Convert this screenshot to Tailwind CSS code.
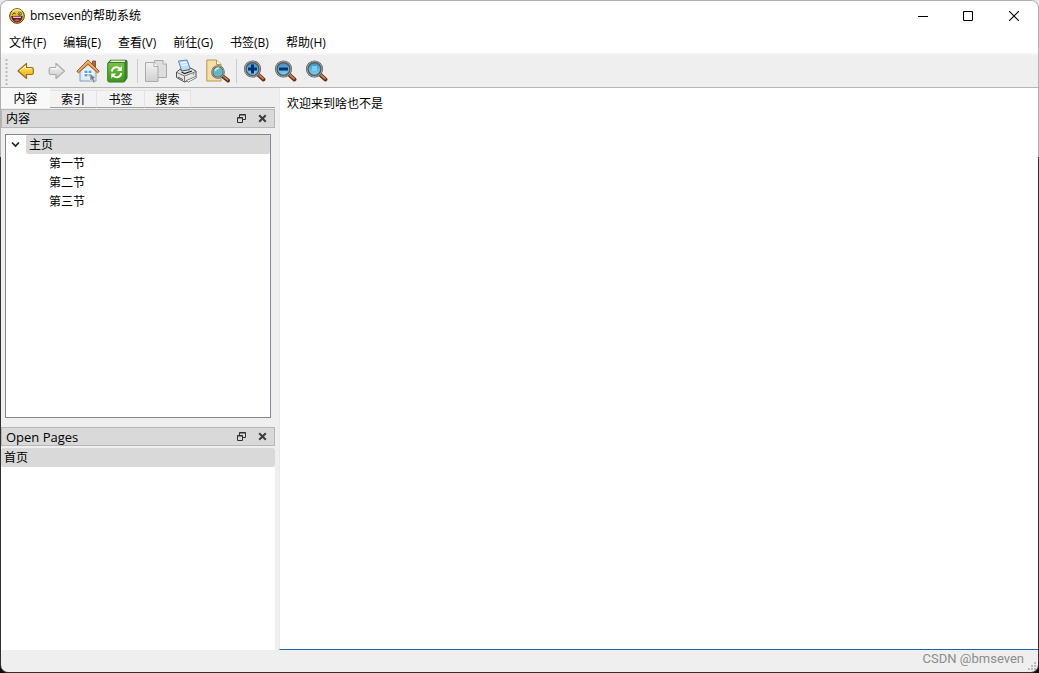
<!DOCTYPE html>
<html lang="zh-CN">
<head>
<meta charset="utf-8">
<meta name="viewport" content="width=device-width, initial-scale=1">
<title>bmseven的帮助系统</title>
<script src="https://cdn.jsdelivr.net/npm/@tailwindcss/browser@4"></script>
</head>
<body class="h-screen overflow-hidden bg-[linear-gradient(#e8e8e8_157px,#0c0c0d_157px)] font-['Open_Sans','Noto_Sans_CJK_SC',sans-serif] text-xs leading-4 text-black">
<svg class="absolute size-0" aria-hidden="true">
  <defs>
    <linearGradient id="gold" x1="0" y1="0" x2="0" y2="1"><stop offset="0" stop-color="#fff3a0"/><stop offset=".5" stop-color="#fccb35"/><stop offset="1" stop-color="#f59b0c"/></linearGradient>
    <linearGradient id="silver" x1="0" y1="0" x2="0" y2="1"><stop offset="0" stop-color="#f4f4f4"/><stop offset="1" stop-color="#cfcfcf"/></linearGradient>
    <linearGradient id="green" x1="0" y1="0" x2="0" y2="1"><stop offset="0" stop-color="#7cc04a"/><stop offset="1" stop-color="#3f9421"/></linearGradient>
    <linearGradient id="lens" x1="0" y1="0" x2="0" y2="1"><stop offset="0" stop-color="#3f86bd"/><stop offset="1" stop-color="#7fd9f7"/></linearGradient>
    <symbol id="magnifier" viewBox="0 0 24 24">
      <path d="M15 15.500l5.500 5" stroke="#5d3320" stroke-width="4" stroke-linecap="round"/>
      <path d="M15.500 15.500l4.500 4.200" stroke="#c98055" stroke-width="1.800" stroke-linecap="round"/>
      <circle cx="9.500" cy="10" r="7.200" fill="url(#lens)" stroke="#55585a" stroke-width="2.800"/>
      <circle cx="9.500" cy="10" r="7.500" fill="none" stroke="#a9adad" stroke-width=".9"/>
    </symbol>
    <symbol id="float" viewBox="0 0 9 9">
      <path d="M2.500 3V.500h6v5H6M2.500 1h6M.500 3.500h5v5h-5zM.500 4h5" fill="none" stroke="#303030" stroke-width="1"/>
    </symbol>
    <symbol id="close" viewBox="0 0 9 9">
      <path d="M1.200 1.200l6.600 6.600M7.800 1.200L1.200 7.800" fill="none" stroke="#3c3c3c" stroke-width="2"/>
    </symbol>
  </defs>
</svg>
<div class="h-full rounded-lg bg-[linear-gradient(#b0b0b0_157px,#303032_157px)] p-px">
<div class="flex h-full flex-col overflow-hidden rounded-[7px] bg-[#efefef]">
  <header class="flex h-[29px] shrink-0 items-center bg-white pl-2">
    <svg class="mr-[5px] size-4 shrink-0" viewBox="0 0 16 16" aria-hidden="true">
      <circle cx="8" cy="8" r="7.300" fill="#f3cc3c" stroke="#4b3508"/>
      <path d="M3.500 3.200q2-1.500 4.500-1.500t4.500 1.500" stroke="#fff1a0" stroke-width="1.200" fill="none"/>
      <path d="M2.700 8.300h10.600q-.4 5.700-5.300 5.700T2.700 8.300z" fill="#6c1747" stroke="#3c1806" stroke-width=".7"/>
      <path d="M4 8.700h8v1H4z" fill="#fff"/><path d="M5 12.300q3-2 6 0-3 2.200-6 0z" fill="#d95063"/>
      <path d="M3.500 6.700q1.500-3.400 3.200-.4" fill="none" stroke="#3d2605"/><circle cx="10.800" cy="5.800" r="1.700" fill="#fff" stroke="#3d2605" stroke-width=".7"/><circle cx="10.800" cy="6" r=".8" fill="#000"/>
    </svg>
    <h1 class="flex-1 whitespace-nowrap">bmseven的帮助系统</h1>
    <button class="flex h-full w-[46px] items-center justify-center" aria-label="最小化"><svg class="size-[10px]" viewBox="0 0 10 10"><path d="M0 5.500h10" stroke="#000"/></svg></button>
    <button class="flex h-full w-11 items-center justify-center" aria-label="最大化"><svg class="size-[10px]" viewBox="0 0 10 10"><rect x=".5" y=".5" width="9" height="9" rx="1" fill="none" stroke="#000" stroke-width="1.100"/></svg></button>
    <button class="flex h-full w-12 items-center justify-center" aria-label="关闭"><svg class="size-[10px]" viewBox="0 0 10 10"><path d="M0 0l10 10M10 0L0 10" stroke="#000" stroke-width="1.100"/></svg></button>
  </header>
  <nav class="flex h-[25px] shrink-0 items-center gap-px border-b-2 border-[#f5f5f5] bg-white pt-0.5" aria-label="菜单">
    <button class="px-2">文件(F)</button>
    <button class="px-2">编辑(E)</button>
    <button class="px-2">查看(V)</button>
    <button class="px-2">前往(G)</button>
    <button class="px-2">书签(B)</button>
    <button class="px-2">帮助(H)</button>
  </nav>
  <div class="flex h-[33px] shrink-0 items-center border-b border-[#b5b5b5] pl-1" role="toolbar" aria-label="工具栏">
    <svg class="mr-1.5 h-7 w-[3px]" viewBox="0 0 3 28" aria-hidden="true"><path d="M1.500 2v26" stroke="#b9b9b9" stroke-width="2" stroke-dasharray="2 2"/></svg>
    <div class="flex items-center gap-[7px]">
      <button aria-label="后退"><svg class="size-6" viewBox="0 0 24 24"><path d="M4 12L12.500 4.500v4h5q1.800 0 1.800 1.800v3.400q0 1.800-1.800 1.800h-5v4z" fill="url(#gold)" stroke="#9c6d20" stroke-width="1.200" stroke-linejoin="round"/><path d="M6 11.700L11.400 7v2.700H17" fill="none" stroke="#fff4b8"/></svg></button>
      <button aria-label="前进" disabled><svg class="size-6" viewBox="0 0 24 24"><path d="M19.500 12L11 4.500v4H6q-1.800 0-1.800 1.800v3.400q0 1.800 1.800 1.800h5v4z" fill="url(#silver)" stroke="#aaa" stroke-width="1.200" stroke-linejoin="round"/><path d="M6 9.800h6V7" fill="none" stroke="#fff"/></svg></button>
      <button aria-label="主页"><svg class="size-6" viewBox="0 0 24 24">
        <path d="M16.500 2h3v7h-3z" fill="#ad6b42" stroke="#74452a" stroke-width=".8"/>
        <path d="M4 11.500L12 4l8 7.500V22H4z" fill="#dfebf7" stroke="#849bb5"/>
        <path d="M.8 12.300L12 .9l11.300 11.400-1.700 1.500L12 5.400l-9.500 8.400z" fill="#df9648" stroke="#88501d" stroke-width=".9"/>
        <path d="M2.500 12L12 2.600l9.500 9.400" fill="none" stroke="#f9c886" stroke-width=".9"/>
        <path d="M8 11h8v7H8z" fill="#54a5e4" stroke="#fff"/><path d="M12 11v7M8 14.500h8" stroke="#fff"/>
        <path d="M14 14.500l6.500 5-3 .2 2 3.300-1.700.9-2-3.300L14 22z" fill="#7a8085" stroke="#eee" stroke-width=".6"/></svg></button>
      <button aria-label="刷新"><svg class="size-6" viewBox="0 0 24 24">
        <path d="M.500 4L3.500 .8h15q2 0 2 2V19l-2.700 3.500z" fill="#28671a"/><path d="M2.500 3L4.500 1.500h14L17.500 3.500z" fill="#e6efd9"/><path d="M18 4l2-2v17l-2 2.500z" fill="#3c832a"/>
        <rect x=".7" y="3.500" width="17.300" height="19.500" rx="1.500" fill="url(#green)" stroke="#357d22"/>
        <path d="M4.800 12.500q.8-4.300 4.700-4.300 2.200 0 3.500 1.800M14.300 14q-.8 4.300-4.700 4.300-2.200 0-3.500-1.800" fill="none" stroke="#f2ffe9" stroke-width="2"/>
        <path d="M14.800 7v5h-5zM4.300 19.500v-5h5z" fill="#f2ffe9"/></svg></button>
    </div>
    <span class="ml-1.5 mr-1.5 h-6 w-px bg-[#cbcbcb]"></span>
    <div class="flex items-center gap-[7px]">
      <button aria-label="复制" disabled><svg class="size-6" viewBox="0 0 24 24"><g stroke="#aaa" stroke-linejoin="round"><path d="M10.500 1.500h8.500l3.500 3.500V18.500H10.500z" fill="#dedede"/><path d="M19 1.500V5h3.500" fill="#fff"/><path d="M1.500 3.500h8.500l4 4V22.500H1.500z" fill="url(#silver)"/><path d="M10 3.500v4h4" fill="#fff"/></g></svg></button>
      <button aria-label="打印"><svg class="size-6" viewBox="0 0 24 24">
        <path d="M3.500 2l8.500-1 3.500 9.500-8.500 2.500z" fill="#b9dcff" stroke="#5588c6"/><path d="M5.500 4l6-.7M6.500 6.500l6-.8" stroke="#fff"/>
        <path d="M1.500 13L5.500 10l1 2 8-1.300L15.500 9l5.500 3v6L9.500 23l-8-4.500z" fill="#e7e7e7" stroke="#505050" stroke-linejoin="round"/>
        <path d="M2 13.500l7.500 3.500L21 12.500M9.500 17v6" fill="none" stroke="#777"/><path d="M6.500 13l3 1.500 7.500-2.500" fill="none" stroke="#222" stroke-width="1.200"/>
        <path d="M3 18l5 2.600" stroke="#555"/><path d="M11.500 21.500l9-4 1 1.200-8.500 4.500z" fill="#fff" stroke="#555" stroke-width=".7"/><circle cx="18.500" cy="15" r=".9" fill="#75c343"/></svg></button>
      <button aria-label="在文本中查找"><svg class="size-6" viewBox="0 0 24 24">
        <path d="M.8 1h9.700L15 5.500V22H.8z" fill="#f5dfa4" stroke="#b6964f"/><path d="M10.500 1v4.500H15" fill="#fff7d5" stroke="#b6964f"/>
        <path d="M17 17.500l5 4" stroke="#5d3320" stroke-width="4" stroke-linecap="round"/><path d="M17.500 17.500l4 3.200" stroke="#c98055" stroke-width="1.600" stroke-linecap="round"/>
        <circle cx="12" cy="13" r="5.800" fill="#6bb6bd" stroke="#555b5b" stroke-width="2"/><circle cx="12" cy="13" r="5.900" fill="none" stroke="#b8c0bd" stroke-width=".7"/><path d="M9 12q1-3 4-3" stroke="#c8eeee" fill="none" stroke-width="1.300"/></svg></button>
    </div>
    <span class="mx-1.5 h-6 w-px bg-[#cbcbcb]"></span>
    <div class="flex items-center gap-[7px]">
      <button aria-label="放大"><svg class="size-6" viewBox="0 0 24 24"><use href="#magnifier"/><path d="M8 5.500h3v3h3v3h-3v3H8v-3H5v-3h3z" fill="#062f74"/></svg></button>
      <button aria-label="缩小"><svg class="size-6" viewBox="0 0 24 24"><use href="#magnifier"/><path d="M5 8.500h9v3H5z" fill="#062f74"/></svg></button>
      <button aria-label="原始大小"><svg class="size-6" viewBox="0 0 24 24"><use href="#magnifier"/><path d="M7 7h5v5H7z" fill="#7acdf1"/></svg></button>
    </div>
  </div>
  <div class="flex min-h-0 flex-1">
    <aside class="flex w-[274px] shrink-0 flex-col">
      <div class="flex h-5 shrink-0 items-end" role="tablist">
        <button class="h-5 w-[49px] bg-[#f9f9f9] pt-px" role="tab" aria-selected="true">内容</button>
        <button class="h-[18px] w-[47px] border-t border-r border-b border-t-[#e3e3e3] border-r-[#e3e3e3] border-b-[#a0a0a0] bg-[#f3f3f3] pt-px" role="tab" aria-selected="false">索引</button>
        <button class="h-[18px] w-12 border-t border-r border-b border-t-[#e3e3e3] border-r-[#e3e3e3] border-b-[#a0a0a0] bg-[#f3f3f3] pt-px" role="tab" aria-selected="false">书签</button>
        <button class="h-[18px] w-[46px] border-t border-r border-b border-t-[#e3e3e3] border-r-[#e3e3e3] border-b-[#a0a0a0] bg-[#f3f3f3] pt-px" role="tab" aria-selected="false">搜索</button>
        <span class="flex-1 border-b border-[#a0a0a0]"></span>
      </div>
      <section class="mt-px flex min-h-0 flex-1 flex-col">
        <div class="flex h-[19px] shrink-0 items-center border border-[#b7b7b7] bg-[#d9d9d9] pl-1 pr-[7px]">
          <h2 class="flex-1 pt-px">内容</h2>
          <button class="mr-3" aria-label="浮动"><svg class="size-[9px]"><use href="#float"/></svg></button>
          <button aria-label="关闭"><svg class="size-[9px]"><use href="#close"/></svg></button>
        </div>
        <ul class="mx-1 mt-1.5 mb-[9px] flex-1 border border-[#828790] bg-white leading-[19px]" role="tree">
          <li role="treeitem" aria-expanded="true">
            <div class="flex items-center">
              <svg class="mx-[5px] size-[10px]" viewBox="0 0 10 10" aria-hidden="true"><path d="M1 2.500L4.500 6 8 2.500" fill="none" stroke="#222" stroke-width="1.700"/></svg>
              <span class="flex-1 rounded-xs bg-[#d9d9d9] pl-[3px]">主页</span>
            </div>
            <ul class="pl-[43px]" role="group">
              <li role="treeitem">第一节</li>
              <li role="treeitem">第二节</li>
              <li role="treeitem">第三节</li>
            </ul>
          </li>
        </ul>
      </section>
      <section class="flex h-[223px] shrink-0 flex-col">
        <div class="flex h-[19px] shrink-0 items-center border border-[#b7b7b7] bg-[#d9d9d9] pl-1 pr-[7px]">
          <h2 class="flex-1 pt-px text-[13px]">Open Pages</h2>
          <button class="mr-3" aria-label="浮动"><svg class="size-[9px]"><use href="#float"/></svg></button>
          <button aria-label="关闭"><svg class="size-[9px]"><use href="#close"/></svg></button>
        </div>
        <ul class="mt-0.5 flex-1 bg-white leading-[19px]" role="listbox" aria-label="Open Pages">
          <li class="rounded-xs bg-[#d9d9d9] pl-[3px]" role="option" aria-selected="true">首页</li>
        </ul>
      </section>
    </aside>
    <main class="ml-1 flex-1 border-b border-l border-b-[#1a64ad] border-l-[#e9e9e9] bg-white px-[7px] pt-2">
      <p>欢迎来到啥也不是</p>
    </main>
  </div>
  <footer class="flex h-[22px] shrink-0 items-center justify-end">
    <span class="mb-1 font-['Roboto',sans-serif] text-[13px] text-[#8c8c8c]">CSDN @bmseven</span>
    <svg class="ml-1 mr-px mb-px size-[9px] self-end" viewBox="0 0 9 9" aria-hidden="true"><path d="M6 0h2v2H6zM3 3h2v2H3zM6 3h2v2H6zM0 6h2v2H0zM3 6h2v2H3zM6 6h2v2H6z" fill="#bcbcbc"/></svg>
  </footer>
</div>
</div>
</body>
</html>
